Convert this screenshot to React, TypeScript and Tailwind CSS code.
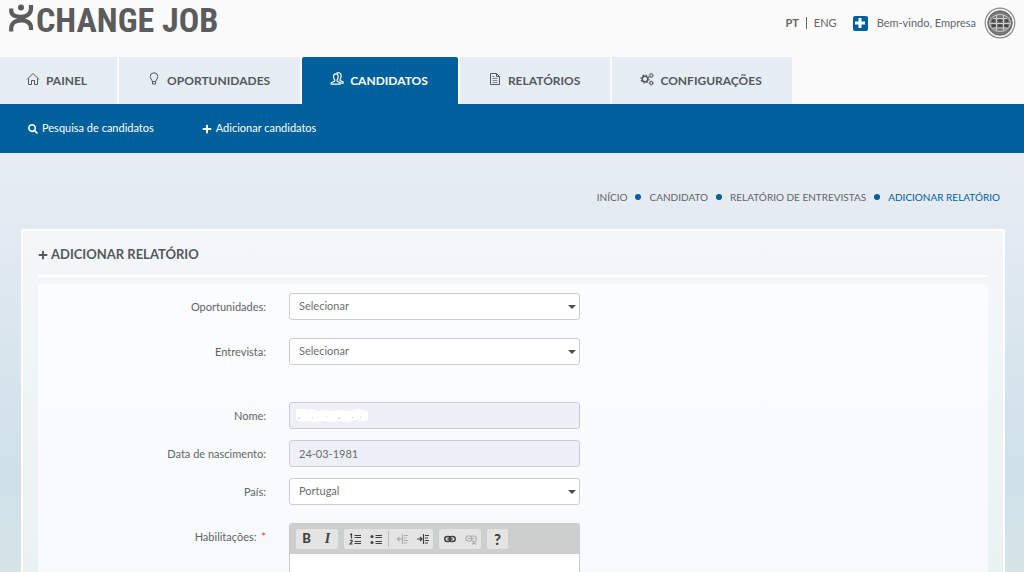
import type { ReactNode } from "react";
import { FaPlus, FaSearch } from "react-icons/fa";

const LogoFigure = () => (
  <svg viewBox="0 0 25 28" className="h-7 w-[25px] shrink-0" aria-hidden="true">
    <circle cx="12" cy="3.600" r="3" fill="#5b5c5e" />
    <g fill="none" stroke="#5b5c5e" strokeWidth="4.200">
      <path d="M2.200 4.500v2c0 4.500 4 6.300 9.900 6.300S22 10 22 4V1" />
      <path d="M2.200 27.500v-3c0-4.500 3-8.200 9.900-8.200S22 19.500 22 24v2" />
      <path d="M8 14.500h8.500" strokeWidth="4" />
    </g>
  </svg>
);

const HomeIcon = () => (
  <svg viewBox="0 0 14 14" className="h-3.5 w-3.5" fill="none" stroke="currentColor" strokeWidth="1" aria-hidden="true">
    <path d="M1 7.500 7 1.500l6 6M2.500 6.500v6h3v-4h3v4h3v-6" />
  </svg>
);

const BulbIcon = () => (
  <svg viewBox="0 0 14 14" className="h-3.5 w-3.5" fill="none" stroke="currentColor" strokeWidth="1" aria-hidden="true">
    <path d="M5.200 9.500C5 7.500 3.200 6.600 3.200 4.600a3.800 3.800 0 0 1 7.600 0C10.800 6.600 9 7.500 8.800 9.500zM5.500 9.500v2.500h3V9.500" />
  </svg>
);

const PeopleIcon = () => (
  <svg viewBox="0 0 14 14" className="h-3.5 w-3.5" fill="none" stroke="currentColor" strokeWidth="1.200" aria-hidden="true">
    <path d="M6.200 1.800C3.800 1.800 3.300 3.500 3.600 5.500c.2 1.200.6 2 1.200 2.600L4.600 9.300 1.200 10.600v1.600h9v-1.600L7.200 9.300 7 8.100c1.400-1.600 1.900-6.300-.8-6.300z" />
    <path d="M6.500 1.200c1-.6 2.200-.7 3.100-.2 2.200 1.100 1.700 4.500.4 6.500l.2 1.100 2.900 1.300v1.300h-2" />
  </svg>
);

const ReportIcon = () => (
  <svg viewBox="0 0 14 14" className="h-3.5 w-3.5" fill="none" stroke="currentColor" strokeWidth="1" aria-hidden="true">
    <path d="M2.500 1.500h6l3 3v8h-9zM8.500 1.500v3h3" />
    <path d="M4.500 6.500h5M4.500 8.500h5M4.500 10.500h5M4.500 4.500h2" strokeOpacity=".7" />
  </svg>
);

const GearsIcon = () => (
  <svg viewBox="0 0 14 14" className="h-3.5 w-3.5" fill="none" stroke="currentColor" aria-hidden="true">
    <circle cx="5" cy="7" r="2.800" strokeWidth="1.500" />
    <circle cx="5" cy="7" r="4" strokeWidth="1.200" strokeDasharray="1.600 1.540" />
    <circle cx="11.200" cy="3.500" r="1.500" strokeWidth="1" />
    <circle cx="11.200" cy="3.500" r="2.200" strokeWidth=".7" strokeDasharray="1 .73" />
    <circle cx="11.200" cy="11" r="1.500" strokeWidth="1" />
    <circle cx="11.200" cy="11" r="2.200" strokeWidth=".7" strokeDasharray="1 .73" />
  </svg>
);

const CompanyBadge = () => (
  <svg viewBox="0 0 32 32" className="h-8 w-8" fill="none" aria-hidden="true">
    <circle cx="16" cy="16" r="14.800" stroke="#8b8b8b" strokeWidth="1.200" fill="#f3f3f3" />
    <circle cx="16" cy="16" r="12.200" fill="#777" stroke="#666" />
    <ellipse cx="16" cy="16" rx="10.500" ry="8.500" stroke="#c9c9c9" strokeWidth="1" />
    <g stroke="#d0d0d0" strokeWidth="1">
      <path d="M6 16.500h20M12.500 8v16M19.500 8v16M9 11.500h14M9 21h14" />
    </g>
    <g fill="#454545">
      <circle cx="9.500" cy="13.800" r="1.500" /><circle cx="16" cy="13.800" r="1.700" /><circle cx="22.500" cy="13.800" r="1.500" />
      <path d="M8 17.500h3.500v2.500H8zM14 17.500h4v2.500h-4zM20.500 17.500H24v2.500h-3.500z" />
    </g>
  </svg>
);

const tabs: { label: string; icon: ReactNode; active?: boolean }[] = [
  { label: "PAINEL", icon: <HomeIcon /> },
  { label: "OPORTUNIDADES", icon: <BulbIcon /> },
  { label: "CANDIDATOS", icon: <PeopleIcon />, active: true },
  { label: "RELATÓRIOS", icon: <ReportIcon /> },
  { label: "CONFIGURAÇÕES", icon: <GearsIcon /> },
];

const Dot = () => <span className="h-1.5 w-1.5 rounded-full bg-[#00609c]" />;

const rowClass = "grid grid-cols-[24%_minmax(0,291px)] gap-x-[23px]";
const labelClass = "text-right leading-7";
const fieldClass = "h-[27px] w-full rounded-[3px] border border-[#c9cdd8] px-[9px] text-[11px] text-[#6b6d70] outline-none";

function SelectRow({ id, label, value }: { id: string; label: string; value: string }) {
  return (
    <div className={rowClass}>
      <label htmlFor={id} className={labelClass}>{label}</label>
      <div className="relative">
        <select id={id} className={`${fieldClass} block appearance-none bg-white`}>
          <option>{value}</option>
        </select>
        <svg viewBox="0 0 8 4" className="pointer-events-none absolute top-3 right-1 h-1 w-2" fill="#4b4d50" aria-hidden="true">
          <path d="M0 0h8L4 4z" />
        </svg>
      </div>
    </div>
  );
}

function InputRow({ id, label, value, children }: { id: string; label: string; value: string; children?: ReactNode }) {
  return (
    <div className={rowClass}>
      <label htmlFor={id} className={labelClass}>{label}</label>
      <div className="relative">
        <input id={id} readOnly defaultValue={value} className={`${fieldClass} block bg-[#edf0f6]`} />
        {children}
      </div>
    </div>
  );
}

const ToolGroup = ({ children }: { children: ReactNode }) => (
  <div className="flex h-5 items-center rounded-[2px] bg-[#e4e4e4]">{children}</div>
);

const Tool = ({ label, dim, children }: { label: string; dim?: boolean; children: ReactNode }) => (
  <button
    type="button"
    aria-label={label}
    disabled={dim}
    className="flex h-5 w-[21px] items-center justify-center text-[#404040] disabled:text-[#adadad]"
  >
    {children}
  </button>
);

const ToolSvg = ({ children }: { children: ReactNode }) => (
  <svg viewBox="0 0 12 12" className="h-3 w-3" fill="none" stroke="currentColor" strokeWidth="1.200" aria-hidden="true">
    {children}
  </svg>
);

export default function App() {
  return (
    <div className="flex min-h-screen flex-col bg-[#fbfbfb] font-['Lato',sans-serif] text-[11px] text-[#626468]">
      <header className="flex h-[57px] items-start justify-between pr-2 pl-[9px]">
        <a href="#" className="flex items-start gap-0.5 pt-1" aria-label="XCHANGE JOB">
          <LogoFigure />
          <span className="font-['Roboto_Condensed','Open_Sans_Condensed','Noto_Sans_Condensed','Roboto',sans-serif] text-[34px] leading-8 font-bold whitespace-nowrap text-[#5b5c5e]">
            CHANGE JOB
          </span>
        </a>
        <div className="flex items-center pt-[7px]">
          <a href="#" className="font-bold">PT</a>
          <span className="mx-[7px] h-3 w-px bg-[#626468]" />
          <a href="#">ENG</a>
          <button type="button" aria-label="Adicionar" className="mr-[9px] ml-4 flex h-[15px] w-[15px] items-center justify-center rounded-[2px] bg-[#00609c] text-white">
            <svg viewBox="0 0 10 10" className="h-2.5 w-2.5" fill="currentColor" aria-hidden="true">
              <path d="M3.500 0h3v3.500H10v3H6.500V10h-3V6.500H0v-3h3.500z" />
            </svg>
          </button>
          <span className="mr-2">Bem-vindo, Empresa</span>
          <CompanyBadge />
        </div>
      </header>

      <nav className="flex h-[47px] gap-0.5 text-xs font-bold">
        {tabs.map((tab) => (
          <a
            key={tab.label}
            href="#"
            className={`flex items-center gap-1.5 pr-[30px] pl-7 first:pl-[26px] ${
              tab.active ? "rounded-t-[2px] bg-[#00609c] text-white" : "bg-[#e7edf5] text-[#55585c]"
            }`}
          >
            <span className="pb-1">{tab.icon}</span>
            <span className="pt-px">{tab.label}</span>
          </a>
        ))}
      </nav>

      <nav className="flex h-[49px] items-center gap-12 bg-[#00609c] pl-7 text-white">
        <a href="#" className="flex items-center gap-1">
          <FaSearch className="h-2.5 w-2.5" />
          Pesquisa de candidatos
        </a>
        <a href="#" className="flex items-center gap-1">
          <FaPlus className="h-2.5 w-2.5" />
          Adicionar candidatos
        </a>
      </nav>

      <main className="flex flex-1 flex-col bg-linear-to-b from-[#e8edf5] via-[#cfe0e9] via-75% to-[#d6e5e5]">
        <nav className="flex h-[76px] items-center justify-end gap-2 pt-3 pr-6 text-[10px]" aria-label="Localização">
          <a href="#">INÍCIO</a>
          <Dot />
          <a href="#">CANDIDATO</a>
          <Dot />
          <a href="#">RELATÓRIO DE ENTREVISTAS</a>
          <Dot />
          <a href="#" className="text-[#00609c]">ADICIONAR RELATÓRIO</a>
        </nav>

        <section className="mr-[19px] ml-[21px] flex flex-1 flex-col rounded-t-[3px] border-2 border-b-0 border-white bg-linear-to-b from-[#f4f7fa] to-[#e9f2f3] px-[15px]">
          <h1 className="flex h-[46px] items-center gap-[3px] border-b-2 border-white pt-1 text-[13px] font-bold text-[#55585c]">
            <FaPlus className="h-2.5 w-2.5" />
            ADICIONAR RELATÓRIO
          </h1>

          <form className="mt-[7px] flex flex-1 flex-col bg-linear-to-b from-[#fbfcfe] to-[#f7fafb] pt-[9px]">
            <div className="flex flex-col gap-[17px]">
              <SelectRow id="opportunity" label="Oportunidades:" value="Selecionar" />
              <SelectRow id="interview" label="Entrevista:" value="Selecionar" />
            </div>
            <div className="mt-9 flex flex-col gap-2.5">
              <InputRow id="name" label="Nome:" value="">
                <svg viewBox="0 0 74 14" className="pointer-events-none absolute top-1.5 left-1.5 h-3.5 w-[74px]" aria-hidden="true">
                  <path d="M1 1h8l3 1 5-1 7 2 7-1 8 1 7-1 9 1 7-2 5 1 6 1v9l-5 1-8-1-7 2-9-1-8 1-8-1-9 1-7-1-6 1-5-2z" fill="#fff" />
                  <path d="M4 9v2M17 10h1M31 9h1M43 10h2M57 9l1 1M65 9h1" stroke="#c4c8d0" />
                </svg>
              </InputRow>
              <InputRow id="birth" label="Data de nascimento:" value="24-03-1981" />
              <SelectRow id="country" label="País:" value="Portugal" />
            </div>
            <div className={`${rowClass} mt-[17px] flex-1`}>
              <label htmlFor="skills" className={labelClass}>
                Habilitações: <span className="ml-0.5 text-[#d9383a]">*</span>
              </label>
              <div className="flex flex-col overflow-hidden rounded-t-[3px] border border-b-0 border-[#c9cdd0] bg-white">
                <div className="flex h-[30px] items-center gap-1.5 bg-[#cdcfce] px-1.5" role="toolbar">
                  <ToolGroup>
                    <Tool label="Negrito"><span className="text-[13px] font-black">B</span></Tool>
                    <Tool label="Itálico"><span className="font-['Liberation_Serif',serif] text-sm font-bold italic">I</span></Tool>
                  </ToolGroup>
                  <ToolGroup>
                    <Tool label="Lista numerada">
                      <ToolSvg><path d="M5.500 2.500H12M5.500 4.500H12M5.500 8.500H12M5.500 10.500H12M1 1.800l1.500-.8v4.500M1 7.500c2-1 3 .4 1.500 1.700L1 11h2.500" /></ToolSvg>
                    </Tool>
                    <Tool label="Lista com marcas">
                      <ToolSvg>
                        <path d="M5.500 2.500H12M5.500 4.500H12M5.500 8.500H12M5.500 10.500H12" />
                        <circle cx="2" cy="3.500" r="1.500" fill="currentColor" stroke="none" />
                        <circle cx="2" cy="9.500" r="1.500" fill="currentColor" stroke="none" />
                      </ToolSvg>
                    </Tool>
                    <span className="mx-0.5 h-4 w-px bg-[#bdbdbd]" />
                    <Tool label="Diminuir recuo" dim>
                      <ToolSvg><path d="M6.500 1v10M8 2.500h4M8 5h3M8 7.500h4M8 10h3M6 6H1.500M3.500 4l-2 2 2 2" /></ToolSvg>
                    </Tool>
                    <Tool label="Aumentar recuo">
                      <ToolSvg><path d="M6.500 1v10M8 2.500h4M8 5h3M8 7.500h4M8 10h3M0 6h5M3 4l2 2-2 2" /></ToolSvg>
                    </Tool>
                  </ToolGroup>
                  <ToolGroup>
                    <Tool label="Ligação">
                      <ToolSvg><rect x=".8" y="3.500" width="6" height="5" rx="2.500" strokeWidth="1.500" /><rect x="5.200" y="3.500" width="6" height="5" rx="2.500" strokeWidth="1.500" /><path d="M3 6h6" /></ToolSvg>
                    </Tool>
                    <Tool label="Remover ligação" dim>
                      <ToolSvg><rect x=".8" y="3" width="6" height="5" rx="2.500" /><path d="M6 3h3c3 0 2.500 3 1.800 4M3 5.500h6M7 7.500l4 4M11 7.500l-4 4" /></ToolSvg>
                    </Tool>
                  </ToolGroup>
                  <ToolGroup>
                    <Tool label="Ajuda"><span className="text-[15px] font-black">?</span></Tool>
                  </ToolGroup>
                </div>
                <textarea id="skills" className="min-h-4 w-full flex-1 resize-none bg-white p-2 outline-none" rows={1} />
              </div>
            </div>
          </form>
        </section>
      </main>
    </div>
  );
}
